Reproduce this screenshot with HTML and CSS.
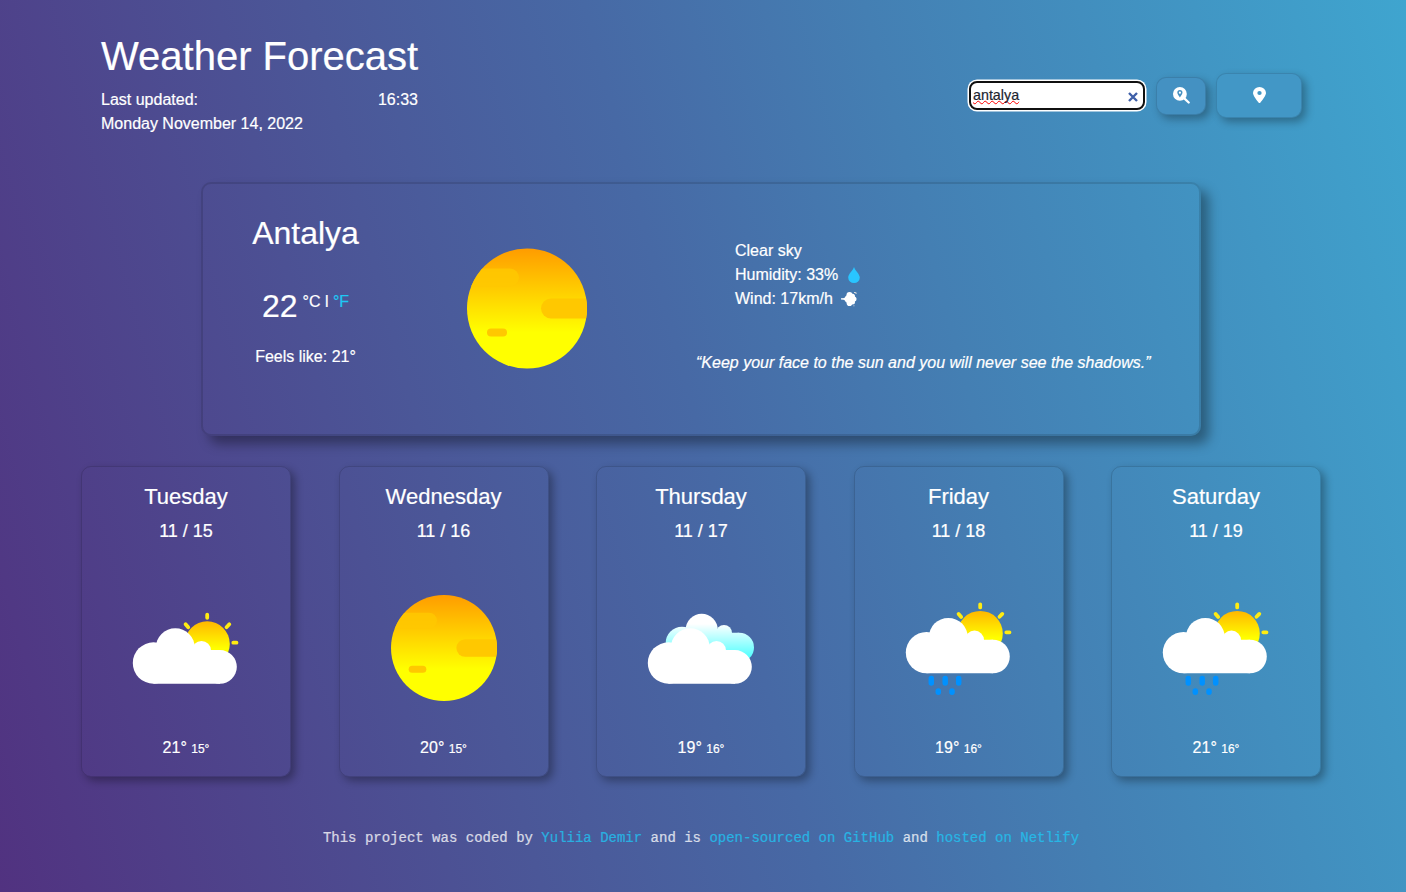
FILE: index.html
```html
<!DOCTYPE html>
<html lang="en">
<head>
<meta charset="utf-8">
<title>Weather Forecast</title>
<link rel="stylesheet" href="styles.css">
</head>
<body>
<svg class="defs" width="0" height="0">
  <defs>
    <linearGradient id="g-sun" x1="0" y1="0" x2="0" y2="1"><stop offset="0" stop-color="#ff9c00"/><stop offset=".7" stop-color="#ffff00"/></linearGradient>
    <linearGradient id="g-small" x1="0" y1="0" x2="0" y2="1"><stop offset="0" stop-color="#ffb700"/><stop offset=".6" stop-color="#ffff00"/></linearGradient>
    <linearGradient id="g-back" gradientUnits="userSpaceOnUse" x1="0" y1="46" x2="0" y2="82"><stop offset="0" stop-color="#fff"/><stop offset="1" stop-color="#4ff"/></linearGradient>
    <clipPath id="disc"><circle cx="60" cy="60" r="60"/></clipPath>
    <symbol id="sun" viewBox="0 0 120 120">
      <circle cx="60" cy="60" r="60" fill="url(#g-sun)"/>
      <g clip-path="url(#disc)" fill="#ffc800">
        <path d="M0 20H43a9 9 0 0 1 0 18H0z" opacity=".85"/>
        <rect x="74" y="50" width="60" height="20" rx="10"/>
        <rect x="20" y="80" width="20" height="8" rx="4"/>
      </g>
    </symbol>
    <g id="cloud" fill="#fff">
      <circle cx="37.5" cy="85" r="20.7"/><circle cx="104" cy="88.9" r="16.8"/>
      <circle cx="59.3" cy="69.8" r="19.5"/><circle cx="85.5" cy="72.5" r="9.5"/>
      <path d="M37.500 75H59V72.100H104V105.700H37.500z"/>
    </g>
    <g id="suncloud">
      <circle cx="91.2" cy="65.900" r="22.600" fill="url(#g-small)"/>
      <path d="M91.200 36.700V39.800M117.300 64.700H120.500M110.500 49.200L113.300 46.300M69.600 46.300L72.200 49.300" stroke="#ffec12" stroke-width="3.800" stroke-linecap="round"/>
      <use href="#cloud"/>
    </g>
    <symbol id="partly" viewBox="0 0 140 140"><use href="#suncloud"/></symbol>
    <symbol id="clouds" viewBox="0 0 140 140">
      <g fill="url(#g-back)"><circle cx="70.7" cy="51.700" r="16"/><circle cx="108.300" cy="69.400" r="14.700"/><circle cx="93" cy="55" r="8"/><circle cx="51" cy="65" r="16.300"/><path d="M55 54.700H108V84H55z"/></g>
      <use href="#cloud"/>
    </symbol>
    <symbol id="rain" viewBox="0 0 140 140">
      <use href="#suncloud" y="-10.400"/>
      <path d="M42.300 100.500v4.500M56.200 100.500v4.500M69.700 100.500v4.500M49.300 113v1.200M63 113v1.200" stroke="#0091ff" stroke-width="5.500" stroke-linecap="round"/>
    </symbol>
  </defs>
</svg>
<div class="page">
  <header class="header">
    <div class="heading">
      <h1>Weather Forecast</h1>
      <div class="updated"><span>Last updated:</span><span>16:33</span></div>
      <div>Monday November 14, 2022</div>
    </div>
    <form class="search">
      <div class="field" role="searchbox"><span class="typed">antalya</span>
        <svg width="10" height="10" viewBox="0 0 10 10"><path d="M1 1L9 9M9 1L1 9" stroke="#3e5fa8" stroke-width="2.400"/></svg>
      </div>
      <button type="button" class="btn find" aria-label="Search">
        <svg width="17" height="17" viewBox="0 0 17 17"><circle cx="6.900" cy="6.900" r="6.900" fill="#fff"/><path d="M11.300 11.300L15.700 15.500" stroke="#fff" stroke-width="2.300" stroke-linecap="round"/><path d="M6.900 3a2.600 2.600 0 0 1 2.600 2.600c0 1.400-1.700 3.600-2.600 4.900-.9-1.300-2.600-3.500-2.600-4.900A2.600 2.600 0 0 1 6.900 3z" fill="#4590c1"/><circle cx="6.900" cy="5.700" r="1.100" fill="#fff"/></svg>
      </button>
      <button type="button" class="btn locate" aria-label="Current location">
        <svg width="13" height="16" viewBox="0 0 12 16" preserveAspectRatio="none"><path fill="#fff" fill-rule="evenodd" d="M6 0a6 6 0 0 1 6 6c0 2.700-3.700 7.600-5.300 9.700a.9.900 0 0 1-1.400 0C3.700 13.600 0 8.700 0 6a6 6 0 0 1 6-6zM6 4a2 2 0 1 0 0 4 2 2 0 0 0 0-4z"/></svg>
      </button>
    </form>
  </header>

  <main>
    <section class="current">
      <div class="place">
        <h2>Antalya</h2>
        <div class="temp"><span class="value">22</span><span class="units">°C l <a>°F</a></span></div>
        <div>Feels like: 21°</div>
      </div>
      <svg class="now"><use href="#sun"/></svg>
      <div class="details">
        <ul>
          <li>Clear sky</li>
          <li>Humidity: 33% <svg class="drop" width="12" height="16" viewBox="0 0 12 16"><path fill="#29c5ff" d="M6 0C7 3.500 11.800 7 11.800 10.500a5.800 5.500 0 0 1-11.600 0C.2 7 5 3.500 6 0z"/></svg></li>
          <li>Wind: 17km/h <svg class="wind" width="16" height="16" viewBox="0 0 16 16"><g fill="#fff"><circle cx="9" cy="8" r="5"/><circle cx="8.500" cy="4" r="3"/><circle cx="11.500" cy="5.300" r="2.500"/><circle cx="13" cy="8" r="2.500"/><circle cx="11.500" cy="11" r="2.500"/><circle cx="8.500" cy="12.200" r="2.800"/><path d="M0 7.300L5 7v2L0 8.600z"/><path d="M2.500 8L5 5v6z"/></g><path d="M13 1.500h1.800M15 1.500v1.500M12.500 14.800h.9" stroke="#ddd" stroke-width="1"/></svg></li>
        </ul>
        <p class="quote">“Keep your face to the sun and you will never see the shadows.”</p>
      </div>
    </section>

    <section class="days">
      <article class="day"><h3>Tuesday</h3><div class="date">11 / 15</div><svg class="icon"><use href="#partly"/></svg><div class="range">21° <small>15°</small></div></article>
      <article class="day"><h3>Wednesday</h3><div class="date">11 / 16</div><svg class="icon full"><use href="#sun"/></svg><div class="range">20° <small>15°</small></div></article>
      <article class="day"><h3>Thursday</h3><div class="date">11 / 17</div><svg class="icon"><use href="#clouds"/></svg><div class="range">19° <small>16°</small></div></article>
      <article class="day"><h3>Friday</h3><div class="date">11 / 18</div><svg class="icon"><use href="#rain"/></svg><div class="range">19° <small>16°</small></div></article>
      <article class="day"><h3>Saturday</h3><div class="date">11 / 19</div><svg class="icon"><use href="#rain"/></svg><div class="range">21° <small>16°</small></div></article>
    </section>
  </main>
  <footer>This project was coded by <a>Yuliia Demir</a> and is <a>open-sourced on GitHub</a> and <a>hosted on Netlify</a></footer>
</div>
</body>
</html>
```
FILE: styles.css
```css
* { box-sizing: border-box; }
body {
  margin: 0;
  min-height: 892px;
  color: #fff;
  font: 16px/24px "Liberation Sans", Arial, sans-serif;
  -webkit-text-stroke: .2px;
  background: linear-gradient(75deg, #513280 0%, #4b5798 33%, #4769a5 50%, #447fb3 67%, #3fa5cf 100%);
}
.defs { position: absolute; }
h1, h2, h3, p, ul { margin: 0; padding: 0; font-weight: 400; }
ul { list-style: none; }
svg { display: block; }
.page { height: 892px; overflow: hidden; padding-top: 32px; }

.header { display: flex; justify-content: space-between; padding: 0 104px 0 101px; }
.heading { width: 317px; white-space: nowrap; }
h1 { font-size: 40px; line-height: 48px; margin-bottom: 8px; }
.updated { display: flex; justify-content: space-between; }

.search { display: flex; align-items: center; height: 45px; margin-top: 41px; }
.field {
  display: flex; align-items: center; justify-content: space-between;
  width: 176px; height: 29px; margin: 0 11px 1px 0; padding: 0 5px 0 2px;
  background: #fff; border: 2px solid #101010; border-radius: 8px;
  box-shadow: 0 0 0 1.500px #fff;
  color: #1d2530; font-size: 14.300px; line-height: 20px;
}
.typed { text-decoration: underline wavy #f00 1px; text-underline-offset: 0; text-decoration-skip-ink: none; }
.field svg { margin-top: 3px; }
.btn {
  display: flex; align-items: center; justify-content: center; padding: 0;
  border: 1px solid rgba(0, 0, 0, .12); border-radius: 10px;
  box-shadow: 4px 4px 8px rgba(0, 0, 0, .3);
  background: #4491c2;
}
.find { width: 50px; height: 38px; margin-right: 10px; }
.find svg { margin-bottom: 1px; }
.locate { width: 86px; height: 45px; background: #4297c6; }
.locate svg { margin-bottom: 1px; }

.current {
  display: flex; width: 1000px; height: 254px; margin: 46px 0 0 201px;
  border: 2px solid rgba(0, 0, 0, .12); border-radius: 10px;
  box-shadow: 8px 8px 12px rgba(0, 0, 0, .35);
}
.place { width: 204px; padding: 30px 0 0 1px; text-align: center; }
h2 { font-size: 32px; line-height: 38px; margin-bottom: 35px; }
.temp { display: flex; justify-content: center; height: 38px; margin-bottom: 20px; }
.value { font-size: 32px; line-height: 38px; margin-right: 5px; }
.units { white-space: pre; line-height: 30px; }
a { color: #1fc8f5; }
.now { width: 120px; height: 121px; margin: 64px 0 0 60px; }
.details { margin: 55px 0 0 109px; white-space: nowrap; }
.details ul { padding-left: 39px; }
.details li { display: flex; align-items: center; }
.drop { margin-left: 10px; }
.wind { margin-left: 8px; }
.quote { margin-top: 40px; font-style: italic; }

.days { display: flex; justify-content: space-between; margin: 30px 85px 0 81px; }
.day {
  display: flex; flex-direction: column; align-items: center;
  width: 210px; height: 311px; padding-top: 16px;
  border: 1px solid rgba(0, 0, 0, .14); border-radius: 10px;
  box-shadow: 4px 4px 8px rgba(0, 0, 0, .32);
}
h3 { font-size: 22px; line-height: 28px; }
.date { font-size: 18px; line-height: 27px; margin-top: 7px; }
.icon { width: 140px; height: 140px; margin: 33px 0 18px; }
.icon.full { width: 106px; height: 106px; margin: 50px 0 35px; }
small { font-size: 12px; }

footer {
  margin-top: 49px; padding-right: 4px; text-align: center;
  font: 14px/24px "Liberation Mono", "Courier New", monospace; opacity: .78;
}
```
